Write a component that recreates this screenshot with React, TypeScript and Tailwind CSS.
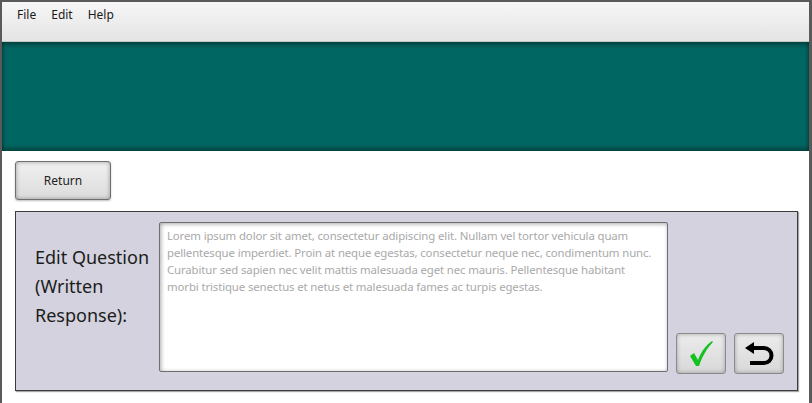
import React from "react";

const font = { fontFamily: '"Noto Sans", "Open Sans", sans-serif' };

export default function App() {
  return (
    <div className="w-[812px] h-[403px] bg-[#5a5a5a] pt-[2px] pl-[2px] pr-[3px] overflow-hidden" style={font}>
      <div className="flex flex-col h-full bg-white">
        <div className="h-[40px] bg-gradient-to-b from-[#f7f7f7] to-[#e4e4e4] border-b border-[#c8c8c8] flex items-start pt-[4px] pl-[15px] gap-[15px] text-[12px] text-[#1a1a1a]">
          <span>File</span>
          <span>Edit</span>
          <span>Help</span>
        </div>
        <div className="h-[109px] bg-[#006662] shadow-[inset_0_3px_4px_rgba(0,0,0,0.35),inset_0_-3px_4px_rgba(0,0,0,0.35)]" />
        <div className="pl-[13px] pt-[10px]">
          <button className="w-[96px] h-[39px] rounded-[3px] border border-[#6f6f6f] bg-gradient-to-b from-[#f0f0f0] to-[#dcdcdc] shadow-[inset_0_0_4px_rgba(0,0,0,0.35),0_1px_2px_rgba(0,0,0,0.25)] text-[12px] text-[#222]">
            Return
          </button>
        </div>
        <div className="ml-[13px] mr-[11px] mt-[11px] h-[180px] bg-[#d3d2de] border border-[#3c3c3c] shadow-[1px_1px_1px_rgba(0,0,0,0.35)] flex pt-[10px] pr-[13px] pb-[16px]">
          <div className="w-[143px] pl-[19px] pt-[21px] text-[18px] leading-[29px] text-[#1c1c1c]">
            Edit Question (Written Response):
          </div>
          <div className="w-[509px] h-[150px] bg-white border border-[#6e6e6e] rounded-[2px] shadow-[inset_1px_1px_4px_rgba(0,0,0,0.35)] pl-[7px] pr-[11px] pt-[4px] text-[11.4px] tracking-[-0.12px] leading-[17px] text-[#a9a9a9]">
            Lorem ipsum dolor sit amet, consectetur adipiscing elit. Nullam vel tortor vehicula quam pellentesque imperdiet. Proin at neque egestas, consectetur neque nec, condimentum nunc. Curabitur sed sapien nec velit mattis malesuada eget nec mauris. Pellentesque habitant morbi tristique senectus et netus et malesuada fames ac turpis egestas.
          </div>
          <div className="flex-1 flex items-end justify-end gap-[8px]">
            <button className="w-[50px] h-[41px] rounded-[3px] border border-[#8a8a8a] bg-gradient-to-b from-[#ececec] to-[#d8d8d8] shadow-[inset_0_0_4px_rgba(0,0,0,0.3)] flex items-center justify-center">
              <svg width="26" height="28" viewBox="0 0 26 28">
                <path d="M2 16 L6 13 L10 20 C13 12 18 5 24 1 L25 2 C19 8 14 17 11 26 L8 26 Z" fill="#12c21f" />
              </svg>
            </button>
            <button className="w-[50px] h-[41px] rounded-[3px] border border-[#8a8a8a] bg-gradient-to-b from-[#ececec] to-[#d8d8d8] shadow-[inset_0_0_4px_rgba(0,0,0,0.3)] flex items-center justify-center">
              <svg width="30" height="24" viewBox="0 0 30 24">
                <path d="M9 6 H20 A7.5 7.5 0 0 1 20 21 H6" fill="none" stroke="#000" strokeWidth="4" />
                <path d="M1 6 L10 0 L10 12 Z" fill="#000" />
              </svg>
            </button>
          </div>
        </div>
      </div>
    </div>
  );
}
